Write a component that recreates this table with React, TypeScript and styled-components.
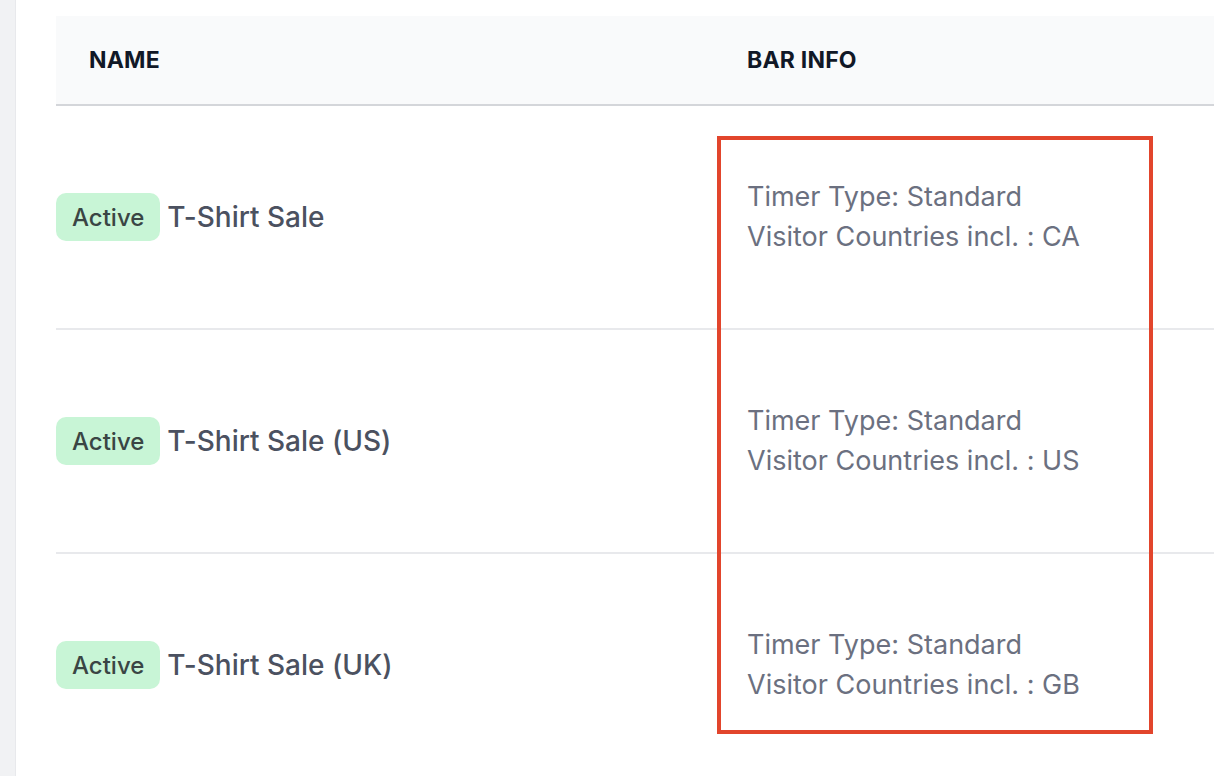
import React from "react";
import styled, { createGlobalStyle } from "styled-components";

const Global = createGlobalStyle`
  html, body { margin: 0; padding: 0; background: #ffffff; overflow: hidden; }
  body {
    font-family: Inter, "Noto Sans", "Liberation Sans", sans-serif;
    -webkit-font-smoothing: antialiased;
    font-feature-settings: "calt" 0;
  }
  #root { width: 1214px; height: 776px; }
`;

const Page = styled.div`
  display: flex;
  width: 1214px;
  height: 776px;
  overflow: hidden;
`;

const SideStrip = styled.div`
  flex: 0 0 16px;
  background: #f1f2f4;
  box-shadow: inset -1px 0 0 #e8e9ec;
`;

const Content = styled.div`
  flex: 1;
  padding: 16px 0 0 40px;
  overflow: hidden;
`;

const TableWrap = styled.div`
  position: relative;
  width: 1400px;
`;

const Table = styled.table`
  width: 100%;
  border-collapse: collapse;
  table-layout: fixed;
`;

const HeadRow = styled.tr`
  background: #f9fafb;
  border-bottom: 2px solid #d4d6da;
`;

const Th = styled.th<{ $w?: number }>`
  ${(p) => (p.$w ? `width: ${p.$w}px;` : "")}
  height: 88px;
  padding: 0 0 0 33px;
  text-align: left;
  font-size: 23px;
  font-weight: 650;
  color: #111827;
  letter-spacing: 0.2px;
  text-transform: uppercase;
  vertical-align: middle;
`;

const Row = styled.tr`
  border-bottom: 2px solid #e8e9ec;
`;

const NameCell = styled.td`
  height: 222px;
  padding: 0;
  vertical-align: middle;
`;

const InfoCell = styled.td`
  padding: 0 0 0 33px;
  vertical-align: middle;
`;

const NameLine = styled.div`
  display: flex;
  align-items: center;
  gap: 7px;
`;

const Badge = styled.span`
  display: inline-flex;
  align-items: center;
  height: 48px;
  padding: 0 16px;
  border-radius: 10px;
  background: #c8f5d6;
  color: #3a4544;
  font-size: 24px;
  font-weight: 500;
`;

const Name = styled.span`
  font-size: 28px;
  font-weight: 500;
  color: #4b5160;
`;

const InfoLine = styled.div`
  font-size: 27px;
  line-height: 40px;
  color: #6b7080;
`;

const Highlight = styled.div`
  position: absolute;
  left: 661px;
  top: 120px;
  width: 428px;
  height: 590px;
  border: 4px solid #e2452c;
  pointer-events: none;
`;

const rows = [
  { name: "T-Shirt Sale", country: "CA" },
  { name: "T-Shirt Sale (US)", country: "US" },
  { name: "T-Shirt Sale (UK)", country: "GB" },
];

export default function App() {
  return (
    <Page>
      <Global />
      <SideStrip />
      <Content>
        <TableWrap>
          <Table>
            <thead>
              <HeadRow>
                <Th $w={625}>Name</Th>
                <Th>Bar Info</Th>
              </HeadRow>
            </thead>
            <tbody>
              {rows.map((r) => (
                <Row key={r.name}>
                  <NameCell>
                    <NameLine>
                      <Badge>Active</Badge>
                      <Name>{r.name}</Name>
                    </NameLine>
                  </NameCell>
                  <InfoCell>
                    <InfoLine>Timer Type: Standard</InfoLine>
                    <InfoLine>Visitor Countries incl. : {r.country}</InfoLine>
                  </InfoCell>
                </Row>
              ))}
            </tbody>
          </Table>
          <Highlight />
        </TableWrap>
      </Content>
    </Page>
  );
}
